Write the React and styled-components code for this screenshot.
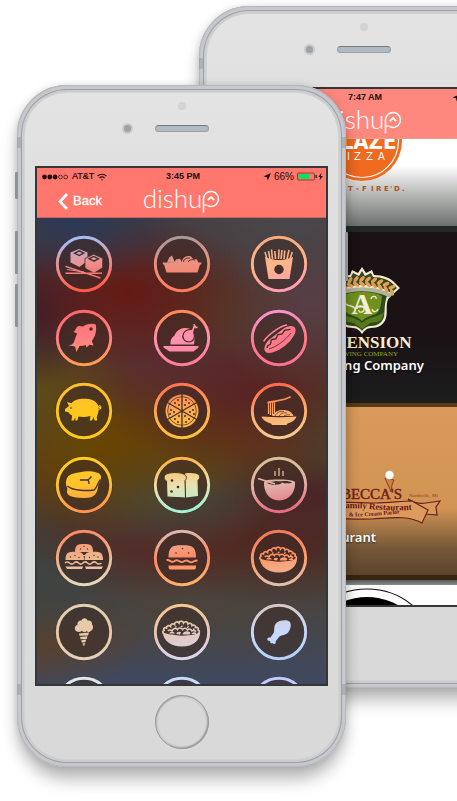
import React from "react";
import styled, { createGlobalStyle } from "styled-components";

const sans = '"Liberation Sans", Arial, sans-serif';
const serif = '"Liberation Serif", "Times New Roman", serif';

const GlobalStyle = createGlobalStyle`
  *, *::before, *::after { box-sizing: border-box; }
  body { margin: 0; background: #fff; font-family: ${sans}; }
  button { padding: 0; border: 0; background: none; font: inherit; color: inherit; cursor: pointer; }
`;

/* ---------- Stage and device ---------- */

const Stage = styled.main`
  display: grid;
  justify-content: start;
  align-items: start;
  min-height: 100vh;
  padding: 6px 0 34px 17px;
  overflow: hidden;
`;

const Phone = styled.section`
  grid-area: 1 / 1;
  position: relative;
  display: flex;
  flex-direction: column;
  width: 329px;
  margin-left: ${(p) => (p.$back ? 182 : 0)}px;
  margin-top: ${(p) => (p.$back ? 0 : 79)}px;
  padding: 0 18px;
  border-radius: 50px;
  background: linear-gradient(#e4e4e4, #dedede 18%, #d9d9d9);
  box-shadow:
    inset 0 0 0 1px #b6b8bc,
    inset 0 0 0 4px #c6c8cd,
    inset 0 0 0 5px #9fa1a5,
    inset 0 0 0 7px #cbcccd,
    inset 0 0 0 8px #d2d3d4,
    0 0 7px rgba(0, 0, 0, 0.1),
    0 8px 16px rgba(0, 0, 0, 0.18),
    0 18px 18px -4px rgba(0, 0, 0, 0.16);
`;

const SideKey = styled.span`
  position: absolute;
  top: ${(p) => p.$top}px;
  ${(p) => p.$side}: -2px;
  width: 3px;
  height: ${(p) => p.$length}px;
  border-radius: 1px;
  background: #8f9297;
`;

const AntennaBand = styled.span`
  position: absolute;
  top: ${(p) => p.$top}px;
  ${(p) => p.$side}: 0;
  width: 4px;
  height: 11px;
  background: rgba(130, 132, 136, 0.35);
`;

const TopBezel = styled.div`
  display: grid;
  grid-template-columns: 1fr 54px 1fr;
  grid-template-rows: 8px 7px;
  row-gap: 15px;
  align-items: center;
  align-content: start;
  justify-items: center;
  height: 81px;
  padding-top: 17px;
`;

const Sensor = styled.span`
  grid-column: 2;
  width: 8px;
  height: 8px;
  border-radius: 50%;
  background: #d3d3d3;
`;

const Camera = styled.span`
  grid-column: 1;
  justify-self: end;
  margin-right: 22px;
  width: 11px;
  height: 11px;
  border: 2px solid #c9cacb;
  border-radius: 50%;
  background: #9ba3a9;
`;

const Speaker = styled.span`
  grid-column: 2;
  width: 54px;
  height: 7px;
  border: 1px solid #9da0a3;
  border-top-color: #777a7d;
  border-radius: 4px;
  background: #b0bac3;
`;

const BottomBezel = styled.div`
  display: flex;
  justify-content: center;
  height: 81px;
  padding-top: 9px;
`;

const HomeButton = styled.button`
  width: 54px;
  height: 54px;
  border-radius: 50%;
  background: linear-gradient(135deg, #a2a2a2, #d4d4d4 45%, #c0c0c0 60%, #8f8f8f);
  box-shadow: inset 0 0 0 1px #9b9b9b;
  display: grid;
  place-items: center;

  &::before {
    content: "";
    width: 48px;
    height: 48px;
    border-radius: 50%;
    background: #d8d8d8;
    box-shadow: 0 0 0 1px #d0d0d0;
  }
`;

const Screen = styled.div`
  display: flex;
  flex-direction: column;
  height: 520px;
  border: 2px solid #343638;
  overflow: hidden;
`;

/* ---------- App header ---------- */

const Header = styled.header`
  flex: none;
  background: ${(p) => (p.$faded ? "#ff887e" : "#ff776d")};
  border-bottom: 1px solid ${(p) => (p.$faded ? "#f09a92" : "#c9655f")};
`;

const StatusBar = styled.div`
  display: grid;
  grid-template-columns: 1fr auto 1fr;
  align-items: center;
  height: 17px;
  padding: 0 2px 0 5px;
  font-size: 9px;
  line-height: 11px;
  color: #1c0f0e;
`;

const StatusGroup = styled.div`
  display: flex;
  align-items: center;
  gap: 3px;
  justify-content: ${(p) => (p.$end ? "flex-end" : "flex-start")};
`;

const Carrier = styled.span`
  -webkit-text-stroke: 0.2px #1c0f0e;
`;

const Clock = styled.time`
  font-weight: 700;
`;

const Percent = styled.span`
  font-size: 10px;
`;

const NavBar = styled.nav`
  display: grid;
  grid-template-columns: 1fr auto 1fr;
  align-items: start;
  height: 32px;
  color: #fff;
`;

const BackButton = styled.button`
  align-self: center;
  justify-self: start;
  display: flex;
  align-items: center;
  gap: 5px;
  padding-left: 21px;
  font-size: 13px;
  line-height: 16px;
  -webkit-text-stroke: 0.3px #fff;
`;

const Brand = styled.h1`
  grid-column: 2;
  display: flex;
  align-items: flex-start;
  margin: 0;
  font: 300 26px/26px Lato, "Open Sans", sans-serif;
`;

const BrandMark = styled.svg`
  width: 18px;
  height: 23px;
  margin-top: 5px;
  overflow: visible;
`;

function BrandName() {
  return (
    <Brand aria-label="dishup">
      dishu
      <BrandMark viewBox="0 0 18 23" fill="none" stroke="#fff" strokeWidth="1.500" aria-hidden="true">
        <path d="M1.500 22.500V9a7.500 7.500 0 1 1 4 6.600" />
        <path d="M1.500 15h4" strokeWidth="1.200" />
        <path d="M5.800 10.200 9 7l3.200 3.200" strokeWidth="1.800" />
      </BrandMark>
    </Brand>
  );
}

const LocationArrow = () => (
  <svg width="8" height="8" viewBox="0 0 8 8" aria-hidden="true">
    <path d="M8 0 4.800 7.500 4 4.200.500 3.500z" fill="#1c0f0e" />
  </svg>
);

const SignalDots = () => (
  <svg width="27" height="6" viewBox="0 0 27 6" aria-hidden="true">
    {[0, 1, 2, 3, 4].map((i) => (
      <circle
        key={i}
        cx={2.5 + i * 5.3}
        cy="3"
        r={i < 3 ? 2.4 : 1.9}
        fill={i < 3 ? "#1c0f0e" : "none"}
        stroke="#1c0f0e"
        strokeWidth={i < 3 ? 0 : 0.7}
      />
    ))}
  </svg>
);

const Wifi = () => (
  <svg width="10" height="8" viewBox="0 0 10 8" fill="none" stroke="#1c0f0e" strokeWidth="1.200" aria-hidden="true">
    <path d="M.700 3a6.200 6.200 0 0 1 8.600 0M2.500 5a3.600 3.600 0 0 1 5 0" />
    <circle cx="5" cy="6.700" r=".7" fill="#1c0f0e" stroke="none" />
  </svg>
);

const Battery = ({ charging }) => (
  <svg width={charging ? 27 : 20} height="9" viewBox={charging ? "0 0 27 9" : "0 0 20 9"} aria-hidden="true">
    <rect x=".5" y="1" width="17" height="7" rx="1" fill="none" stroke="#6c2f2c" strokeWidth=".8" />
    <rect x="1.500" y="2" width="10.500" height="5" fill="#12dd5c" />
    <path d="M18.500 3v3h1.200V3z" fill="#1c0f0e" />
    {charging && <path d="M24.600.800 21.300 5h2l-.8 3.300L26 3.900h-2.200z" fill="#1c0f0e" />}
  </svg>
);

function AppHeader({ time, charging, faded, children }) {
  return (
    <Header $faded={faded}>
      <StatusBar>
        <StatusGroup>
          <SignalDots />
          <Carrier>AT&amp;T</Carrier>
          <Wifi />
        </StatusGroup>
        <Clock>{time}</Clock>
        <StatusGroup $end>
          <LocationArrow />
          <Percent>66%</Percent>
          <Battery charging={charging} />
        </StatusGroup>
      </StatusBar>
      <NavBar>
        {children}
        <BrandName />
      </NavBar>
    </Header>
  );
}

/* ---------- Cuisine grid ---------- */

const CuisineArea = styled.div`
  flex: 1;
  min-height: 0;
  overflow: hidden;
  background:
    radial-gradient(ellipse 110px 65px at 13% 0%, #2a3957, transparent),
    radial-gradient(ellipse 130px 75px at 32% 16%, #681710e0, transparent),
    radial-gradient(ellipse 70px 75px at 0% 20%, #3a2030, transparent),
    radial-gradient(ellipse 80px 60px at 62% 19%, #55402890, transparent),
    radial-gradient(ellipse 150px 80px at 88% 0%, #4a484b, transparent),
    radial-gradient(ellipse 110px 90px at 95% 18%, #573f46, transparent),
    radial-gradient(ellipse 90px 80px at 0% 38%, #5c4a1a, transparent),
    radial-gradient(ellipse 120px 60px at 42% 31%, #5a2c36b0, transparent),
    radial-gradient(ellipse 150px 80px at 72% 37%, #5a1f22d0, transparent),
    radial-gradient(ellipse 160px 95px at 20% 48%, #694500, transparent),
    radial-gradient(ellipse 110px 60px at 66% 47%, #653912b0, transparent),
    radial-gradient(ellipse 80px 60px at 100% 46%, #4c432c, transparent),
    radial-gradient(ellipse 110px 60px at 45% 60%, #3f4e47d0, transparent),
    radial-gradient(ellipse 110px 75px at 98% 59%, #4a2429, transparent),
    radial-gradient(ellipse 120px 60px at 38% 69%, #5c2220c0, transparent),
    radial-gradient(ellipse 140px 65px at 80% 69%, #55221ac0, transparent),
    radial-gradient(ellipse 110px 75px at 3% 77%, #3e4442, transparent),
    radial-gradient(ellipse 110px 50px at 0% 91%, #5a3f2a, transparent),
    radial-gradient(ellipse 190px 70px at 50% 83%, #4e4337c0, transparent),
    linear-gradient(#433b40, #522f2c 20%, #573a22 50%, #45382f 72%, #45464a 86%, #404960);
`;

const CuisineGrid = styled.ul`
  display: grid;
  grid-template-columns: repeat(3, 58px);
  justify-content: space-between;
  align-content: space-between;
  height: 499px;
  margin: 17px 18px 0;
  padding: 0;
  list-style: none;
`;

const CuisineButton = styled.button`
  display: block;
  width: 58px;
  height: 58px;
  border-radius: 50%;
`;

const Badge = styled.svg`
  display: block;
  width: 58px;
  height: 58px;
`;

const dark = "#43302b";

function Tiny({ points, r = 0.7 }) {
  return points.map(([x, y]) => <circle key={`${x}-${y}`} cx={x} cy={y} r={r} fill={dark} />);
}

const saladArt = (p) => (
  <>
    <path
      d="M11.500 31c-2-1-2.500-3-.5-3.500-1-2 .5-3.500 2.500-2.500 0-2.500 2.500-3 4-1.500 0-2.500 2.500-3.500 4-2 0-2.500 3-3.500 4.500-1.500.5-2.500 4-2.500 4.500 0 1.500-2 4.500-1.500 4.500 1 2-1.500 4-.5 4 1.500 2-1 4 0 3.500 2 2-.5 3.500.8 2.500 2.500 2 .5 2 3-.5 4"
      stroke={p}
      strokeWidth="1.700"
    />
    <path d="M15 28c1-1.500 3-1.500 4 0 1-2.500 4-3.500 5.500-1.500 1-2 4-2 5 0 1.500-2 4-1.500 5 .5 1.500-1.500 4-1 4.500 1 1.500-1 3-.5 4 1" stroke={p} strokeWidth="1.500" />
    <path fill={p} d="M16 30.500c1-2.500 5-2.500 6 0zM23.500 31c0-2 3-3 4.500-1.500L27 31.500zM29.500 31.500c.5-3.500 6-4.500 8-1.500l-1 1.500zM38.500 31c1-2.500 4.500-2.500 5 0z" />
    <path d="M22 24.500l1.500-1M28 24l1.500-1.200M34 24.500l1.800-1M40 26.500l1.500-.5" stroke={p} strokeWidth="1.400" />
    <path fill={p} d="M10 29.500c4 2 8 1.500 12 2.500 4 .8 9 1 13 .3 4-.6 8-.8 12-2.800 0 8-7 14-18 14s-19-6-19-14z" />
  </>
);

const burgerTop = (x, y, w, p) => (
  <path fill={p} d={`M${x} ${y}c0-${w * 0.45} ${w * 0.2}-${w * 0.45} ${w / 2}-${w * 0.45}s${w / 2} 0 ${w / 2} ${w * 0.45}z`} />
);

const art = {
  sushi: (p) => (
    <>
      <path fill={p} d="M15.500 17.500 24 14l8.500 3.500v8.300L24.500 32l-9-4.500z" />
      <path fill={dark} d="M18 18.200 24.200 15l6 2.900-5.800 3.400z" />
      <path fill={p} d="M21 18.200l3.200-1.500 3 1.400-2.900 1.600z" />
      <path fill={p} stroke={dark} strokeWidth=".8" d="M30 23.500 38.700 19.200l9 4v9.500L39 38.200l-9-5z" />
      <path fill={dark} d="M32.500 23.800l6.200-3 6.300 3-6 3.300z" />
      <path fill={p} d="M35.600 23.700l3.200-1.400 3.100 1.400-3 1.600z" />
      <path stroke={p} strokeWidth="1.400" d="M10.500 38.300H47M10.500 31.300 45.500 43" />
      <path stroke={p} strokeWidth="1" d="M12 34.500 29 37" />
    </>
  ),
  tacos: (p) => (
    <>
      <path fill={p} d="M14 27.500l2.200-5 2.800-2 1.500 3.500 1.500 4zM21 28l2-3.500 4-.8 2.500 4.300zM29 26c1-4 6-6 9-4.500l2 2.500 4 .5 1.500 3.500H29z" />
      <path d="M30 27c1-3 4-4.500 7-4M35 27c1-2 4-3 7-2" stroke={dark} strokeWidth=".9" fill="none" />
      <path fill={p} d="M9.500 27.500h39l-.5 2h-1L44.500 37.500h-31L11 29.500h-1z" />
    </>
  ),
  fries: (p) => (
    <>
      <path
        stroke={p}
        strokeWidth="1.600"
        fill="none"
        d="M17 24l-2-7M20 24l-1.500-8M22.500 24l-1-9.500M25.500 24l-.7-8M28.500 24l.5-9.500M31 24l1-9M34 24l.8-8.500M37 24l2-9M40 24l2.300-7"
      />
      <path fill={p} d="M15 22c4 1 7 3 14 3s10-2 14-3l-3.500 22H18.500z" />
      <circle cx="29" cy="34.500" r="4.700" fill={dark} />
    </>
  ),
  fish: (p) => (
    <>
      <path
        fill={p}
        d="M40.800 15.500c1 6-.3 12-4 16.500l1.700 4.500-4-.8-3 2.800-.8-2.500c-2 .8-4.200 1-6.200 1l-3 6-1.500-5.500-6.500-1.300c4.500-.5 5.200-2 6.200-5.200.8-2.300 1.300-4.500 2.600-6.500l-4-1.500c2.500-1 2.500-5.500 5.800-6l4 .6c3.200-2.400 8-3.600 12.700-2.100z"
      />
      <circle cx="36" cy="20" r="1.700" fill={dark} />
    </>
  ),
  turkey: (p) => (
    <>
      <path fill={p} d="M10.500 37h35v1.500L40.500 42.500h-24l-6-4z" />
      <path fill={p} d="M17.500 35.500c-.5-4 1-7 4-9 2-5 6-7.500 11-7.500 7 0 10.500 6 8.500 16.500z" />
      <path fill={p} stroke={dark} strokeWidth="1.200" d="M38.500 20.500l1.500-4-.6-2.400 2.700.4 1.400 2.500 2 .2-.6 2.500-3.200.2-1 3.500c2 5-.5 9.600-4.700 9.600-4.800 0-7.500-4.500-5.500-8.500 1.500-3 4.500-4.200 8-4z" />
    </>
  ),
  hotdog: (p) => (
    <>
      <ellipse cx="30" cy="30.500" rx="19" ry="8" transform="rotate(-39 30 30.500)" fill={p} />
      <path d="M13.500 33 38 14" stroke={dark} strokeWidth="3.400" />
      <path d="M14 32C17 26.500 30 17 36.500 16" stroke={p} strokeWidth="1.600" strokeLinecap="round" />
      <path d="M17 39c0-3 1.500-2.500 3-3.500s0-4 2-5 2.500.5 4-1 .5-3.500 2.500-4 2.500.5 4-1 1-3 3-3.500 3 .5 5-1" stroke={dark} strokeWidth="1.400" />
      <path d="M19 40c8-2.500 16-8.500 22-16" stroke={dark} strokeWidth=".8" />
    </>
  ),
  pig: (p) => (
    <>
      <path
        fill={p}
        d="M10 27l4-3-2-4 4.500 1.200C20 17 25 16.500 31 16.800c7 .4 12 3.200 12.700 9.200 0 4-1 7-2 9l.5 3.500h-2.500L38.500 35 37 38.500h-2.200l.7-4.500c-4 1-8 1.200-12 .5l-1.200 4h-2l.2-3-2 3h-2l.7-5c-2-1-3-2-4-3.500l-3.200-.6z"
      />
      <path d="M43.500 27c3 1 3-3.500 1-3.200-1.800.4-.4 2.700 1.800 1.500" stroke={p} strokeWidth="1.100" fill="none" />
      <circle cx="16" cy="26" r=".8" fill={dark} />
    </>
  ),
  pizza: (p) => (
    <>
      <circle cx="29" cy="29" r="16.500" fill={p} />
      <circle cx="29" cy="29" r="14.300" fill="none" stroke={dark} strokeWidth=".7" />
      <path d="M29 11v36M13.500 20 44.500 38M44.500 20l-31 18" stroke={dark} strokeWidth="1.300" />
      <Tiny
        r={1}
        points={[[25, 18], [22, 21], [26, 23], [33, 18], [36, 21], [32, 23], [18, 28], [21, 30], [17, 32], [40, 28], [37, 30], [41, 32], [25, 40], [22, 37], [26, 34], [33, 40], [36, 37], [32, 34]]}
      />
    </>
  ),
  pasta: (p) => (
    <>
      <path d="M18.500 20v12M20.500 20v13M22.500 20v13M24.500 20v11" stroke={p} strokeWidth="1.200" />
      <path fill={p} d="M17.500 19.500l8-1.200 9-1.800 6-2.500.5 1.500-6 2.500-9.500 2-8 1.500z" />
      <path fill={p} d="M22 34c3-5 7-6 11-6 5 0 9 2 10.500 6z" />
      <path d="M25 34c2-4 5-5 9-4.500M29 34c2-3 5-3.500 8-3M34 34c1-1 4-1.500 6-1" stroke={dark} strokeWidth=".7" fill="none" />
      <path fill={p} d="M11.500 34.500c12 1 23 1 35 0-1 3.500-4 5.500-9 7l-1 1.500H22l-1-1.500c-5-1.500-8.500-3.500-9.500-7z" />
    </>
  ),
  steak: (p) => (
    <>
      <path fill={p} d="M12 22c3-5 8-4.500 14-6 6-1.500 17-1 19.500 3 1 2 .5 6-2 9.500l-1 5c-1 5-5 8.500-12 8.500-8 0-18-1-18.500-5.500l.3-4.500c-1.800-2.500-1.800-7-.3-10z" />
      <path d="M12.500 30c5 5 20 5 26.500 4 3-2 3.500-7 6.500-10.500" stroke={dark} strokeWidth="1.400" fill="none" />
      <path d="M25 24h7c2 0 2-1 4.500-3.500M33 24c1 1 1 2 1 4" stroke={dark} strokeWidth="1.400" fill="none" />
    </>
  ),
  bread: (p) => (
    <>
      <path fill={p} d="M32 17.500c5-1 12-.5 14 2 1 3-1 4-1.500 5l.5 15.500-12 1.500z" />
      <path fill={p} stroke={dark} strokeWidth="1" d="M12.500 18.500c4-2.500 14-2.500 18-.5 3 1.500 4 4 1.500 6.500l.5 17.500-18.500-1-.5-16c-2-1-3.500-4-1-6.500z" />
      <Tiny r={1.3} points={[[19, 24.500], [25, 31], [18.500, 35.500]]} />
    </>
  ),
  soup: (p) => (
    <>
      <path stroke={p} strokeWidth="1.300" d="M25 20v-5M29 20v-8M33 20v-5" />
      <path fill={p} d="M14 26c2-2.500 9-2.500 15-2.500S43 24 45 26c1 10-6 18.500-16 18.500S13.500 36 14 26z" />
      <path fill={dark} d="M17 27c3-2 6-1 9-2 3 1 6-.5 9 0 3 0 5 .5 7 1.500-2 1.500-5 .5-7 1l-3-1c-2 2-3 2-5 2-3 1-7 0-10-1.500z" />
      <path stroke={p} strokeWidth="1.800" fill="none" d="M8 22.500 19 26l6 2" />
    </>
  ),
  sliders: (p) => (
    <>
      {burgerTop(20, 23, 18, p)}
      {burgerTop(10.500, 31, 18.500, p)}
      {burgerTop(29.500, 31, 18.500, p)}
      <path d="M23 25h3l2 1.500h2l2-1.500h3" stroke={p} strokeWidth="1.200" fill="none" />
      <path d="M10 34c1.500-1.500 3-1.500 4.500 0s3 1.500 4.500 0 3-1.500 4.500 0 3 1.500 4.500 0 3-1.500 4.500 0 3 1.500 4.500 0 3-1.500 4.500 0 3 1.500 5 0" stroke={p} strokeWidth="1.500" fill="none" />
      <path fill={p} d="M10.500 37.500h17.500V38l-1 2H12zM30 37.500h18L46.500 40H31z" />
      <Tiny points={[[29, 17.500], [25.500, 20], [32.500, 20], [15.500, 28], [20, 26.500], [24, 28.500], [34.500, 28.500], [39, 26.500], [43, 28]]} />
    </>
  ),
  burger: (p) => (
    <>
      {burgerTop(15.500, 28.500, 27.500, p)}
      <path d="M13.500 31c2-.5 3 .5 4.500 1.500s3 0 4.500-1 3 0 4.500 1 3 .5 4.500-.5 3-.5 4.500.5 3 1 4.500 0 2-1 4-1" stroke={p} strokeWidth="2" fill="none" />
      <path fill={p} d="M15.500 36.500h27.500c0 3-.5 4-2 4H17.500c-1.500 0-2-1-2-4z" />
      <Tiny r={0.8} points={[[29.500, 19.500], [23, 24], [35.500, 24]]} />
    </>
  ),
  salad: saladArt,
  iceCream: (p) => (
    <>
      <path fill={p} d="M21 28c-2-2-1-6 1.500-6-.5-3 2-5 4-4.500 1-3 5-3 6 0 3-.5 5 1.500 4.500 4 2 1.500 1 6-1.500 6.500-1.500 2-3 1-4 0-2 2-3.500 1-4.500-.2-2 1.700-4 1.700-6 .2z" />
      <path fill={p} d="M24 30.500l10-1-1 3-8.500.3zM25 34l7.500-.7-.8 2.700-6 .3zM26.200 37.300l5-.8-.8 2.700-3.500.4zM27.500 40.500l2.500-.5-1 3.500z" />
    </>
  ),
  drumstick: (p) => (
    <path
      fill={p}
      d="M27 19.500c3-2.500 10-3 12.500-1 2.500 3 1 8.500-1.800 11.500-2.700 2-5.500 2-8 3.200l-4 5c.8 2.500-1.700 3.500-3.200 2-1 .2-1.800 0-2.300-.8.5-1.800-1-1.600-2.500-2-1.300-1.700.5-3.500 2.500-2.600l3.600-5c1-3.500-.5-7.500 3.200-10.300z"
    />
  ),
  none: () => null,
};

const cuisines = [
  ["Sushi", "sushi", "#a6bcf6", "#ee8f90", "#ff5a48"],
  ["Mexican", "tacos", "#a89a9c", "#ee9080", "#ff7a5c"],
  ["Fries", "fries", "#f6ab7e", "#ffb587", "#ff9cb2"],
  ["Seafood", "fish", "#ff6868", "#ff8086", "#ff9c52"],
  ["Poultry", "turkey", "#ff8a5a", "#ff92b4", "#ff7d98"],
  ["Hot dogs", "hotdog", "#f794cc", "#ff7a88", "#ff7090"],
  ["Pork", "pig", "#ffbe30", "#ffc61e", "#ffca14"],
  ["Pizza", "pizza", "#ff7650", "#ffab52", "#ffc038"],
  ["Pasta", "pasta", "#ff6a4e", "#ffab6c", "#f5cb90"],
  ["Steak", "steak", "#ffcc1e", "#ffc22e", "#ff9450"],
  ["Bakery", "bread", "#ffb348", "#ece0ae", "#a4f2d8"],
  ["Soup", "soup", "#d6c094", "#e2b0a8", "#e66e80"],
  ["Sliders", "sliders", "#ff8a66", "#edb48e", "#e3d8bc"],
  ["Burgers", "burger", "#dcb8a8", "#ff8a64", "#ffb06c"],
  ["Salads", "salad", "#f07c60", "#ff9a68", "#e6bca8"],
  ["Ice cream", "iceCream", "#e0d2b4", "#e8c8a4", "#e4d0bc"],
  ["Healthy", "salad", "#f4c692", "#e2c8ba", "#dcd4ee"],
  ["Wings", "drumstick", "#d8c6c6", "#c8daff", "#b4d0ff"],
  ["Coffee", "none", "#dde8ea", "#d8e4f0", "#c8d8f0"],
  ["Drinks", "none", "#c4defa", "#c0d4ff", "#b8d0ff"],
  ["Desserts", "none", "#bccdff", "#b8c8ff", "#b4c4ff"],
];

function CuisineBadge({ id, drawing, colors }) {
  const paint = `url(#${id})`;
  return (
    <Badge viewBox="0 0 58 58" fill="none" aria-hidden="true">
      <defs>
        <linearGradient id={id} gradientUnits="userSpaceOnUse" x1="25" y1="1" x2="33" y2="57">
          <stop offset="0.050" stopColor={colors[0]} />
          <stop offset="0.500" stopColor={colors[1]} />
          <stop offset="0.950" stopColor={colors[2]} />
        </linearGradient>
      </defs>
      <circle cx="29" cy="29" r="28.800" fill="#3c2a26" fillOpacity="0.500" />
      <circle cx="29" cy="29" r="26.700" stroke={paint} strokeWidth="2.900" />
      {art[drawing](paint)}
    </Badge>
  );
}

/* ---------- Restaurant list ---------- */

const RestaurantList = styled.ul`
  flex: 1;
  display: grid;
  grid-template-rows: 93px 175px 173px 1fr;
  min-height: 0;
  margin: 0;
  padding: 0;
  list-style: none;
`;

const cardSkins = {
  blaze: { fill: "linear-gradient(#fff 30%, #b4b6b4 65%, #6c706e)", edge: "6px solid #242928" },
  ascension: { fill: "linear-gradient(#1a1214 60%, #1b1d1e)", edge: "4px solid #5c3a16" },
  rebecca: { fill: "linear-gradient(#d99a5c, #d29453 60%, #735638 85%, #5c452c)", edge: "5px solid #38260f" },
  last: { fill: "linear-gradient(#5a5a5a, #8c8c8c 5px, #fff 5px)", edge: "0" },
};

const Card = styled.li`
  display: grid;
  align-items: end;
  min-height: 0;
  overflow: hidden;
  background: ${(p) => cardSkins[p.$skin].fill};
  border-bottom: ${(p) => cardSkins[p.$skin].edge};
`;

const CardArt = styled.svg`
  grid-area: 1 / 1;
  align-self: ${(p) => (p.$top ? "start" : "end")};
  display: block;
  width: 289px;
  height: ${(p) => p.$height}px;
`;

const CardTitle = styled.h2`
  grid-area: 1 / 1;
  margin: 0;
  padding: 0 0 29px 22px;
  font: 600 13px/18px "Noto Sans", "Open Sans", sans-serif;
  color: #fff;
  text-shadow: 0 1px 2px rgba(0, 0, 0, 0.6);
`;

const BlazeLogo = () => (
  <CardArt $height={87} viewBox="219 139 289 87" aria-label="Blaze Pizza, fast-fire'd">
    <circle cx="362" cy="141" r="40" fill="#f06a1f" />
    <circle cx="362" cy="141" r="36.500" fill="none" stroke="#fff" strokeWidth="1.200" />
    <text x="361" y="149" textAnchor="middle" fontFamily='"DejaVu Sans Condensed", "DejaVu Sans", sans-serif' fontWeight="700" fontSize="22" fill="#fff">
      BLAZE
    </text>
    <text x="337 347 354 366 378" y="160" fontFamily='"DejaVu Sans", sans-serif' fontSize="10" fill="#fff">
      PIZZA
    </text>
    <text x="312 321 331 348 356 362 371 376 384 390 394 402" y="191" fontFamily='"DejaVu Sans", sans-serif' fontWeight="700" fontSize="7" fill="#b0501f">
      FAST-FIRE'D.
    </text>
  </CardArt>
);

const AscensionLogo = () => (
  <CardArt $height={171} viewBox="219 232 289 171" aria-label="Ascension Brewing Company">
    <path
      fill="#f2ecd2"
      d="M362 267L366 273L372 270L374 275C383 275 391 278 395 283L400 288L392 295L389 298C385 303 388 312 386 318C384 325 378 328 371 328C367 328 364 331 362 334C360 331 357 328 353 328C346 328 340 325 338 318C336 312 339 303 335 298L332 295L324 288L329 283C333 278 341 275 350 275L352 270L358 273Z"
    />
    <path fill="#3a4320" d="M362 271l3 5 6-3 2 4c9 0 16 3 20 7l4 4-6 5c-9-6-18-8-29-8s-20 2-29 8l-6-5 4-4c4-4 11-7 20-7l2-4 6 3z" />
    <path fill="#2e4a1c" d="M362 290c10 0 18 2 25 6-3 8-2 15-3 21-2 6-7 9-13 9-4 0-7 2-9 5-2-3-5-5-9-5-6 0-11-3-13-9-1-6 0-13-3-21 7-4 15-6 25-6z" />
    <path fill="#71901f" d="M362 292c8 0 15 1 20 4-1 8-1 13-5 17-4 3-10 3-15 8-5-5-11-5-15-8-4-4-4-9-5-17 5-3 12-4 20-4z" />
    <path fill="#577a1c" d="M340 312c7 6 14 4 22 11 8-7 15-5 22-11l-2 7c-4 4-8 3-12 4l-8 6-8-6c-4-1-8 0-12-4z" />
    <g fill="#dfa255">
      {[-30, -24, -18, -12, -6, 0, 6, 12, 18, 24, 30].map((dx) => (
        <g key={dx}>
          <ellipse cx={362 + dx} cy={279 + (dx * dx) / 110} rx="1.800" ry="3.600" transform={`rotate(${40 + dx} ${362 + dx} ${279 + (dx * dx) / 110})`} />
          <ellipse cx={362 + dx} cy={284 + (dx * dx) / 110} rx="1.800" ry="3.600" transform={`rotate(${dx - 50} ${362 + dx} ${284 + (dx * dx) / 110})`} />
        </g>
      ))}
    </g>
    <path d="M333 296c17-9 41-9 58 0" fill="none" stroke="#aeb39a" strokeWidth="4" />
    <text x="362" y="314" textAnchor="middle" fontFamily={serif} fontWeight="700" fontSize="29" fill="#f4efd8">
      A
    </text>
    <path d="M346 304c3 3 8 1 9 5M357 309c0-4 7-4 7 0s-6 4-5 1M371 299c1-4 6-3 5 0M372 309c1 4 5 3 6 0" fill="none" stroke="#ebe7cc" strokeWidth="1.400" />
    <text x="362" y="348" textAnchor="middle" fontFamily={serif} fontWeight="700" fontSize="17" fill="#f6eed0">
      ASCENSION
    </text>
    <text x="398" y="356" textAnchor="end" fontFamily={serif} fontSize="7" fill="#93a526">
      BREWING COMPANY
    </text>
  </CardArt>
);

const RebeccaLogo = () => (
  <CardArt $height={168} viewBox="219 407 289 168" aria-label="Rebecca's Family Restaurant and Ice Cream Parlor">
    <defs>
      <path id="ribbonLine" d="M300 514q42-8 70-5t60-1" />
      <path id="parlorLine" d="M330 515q30 4 80-3" />
    </defs>
    <text x="402" y="499" textAnchor="end" fontFamily={serif} fontSize="15" fill="#711a1b" stroke="#711a1b" strokeWidth=".4">
      REBECCA'S
    </text>
    <path d="M385 478l9 2-2 5-1 7c-1-4-4-8-6-14z" fill="#c98245" stroke="#7b2a1c" strokeWidth=".8" />
    <circle cx="389.500" cy="475" r="4.500" fill="#fff" stroke="#b78b62" strokeWidth=".6" />
    <path d="M408 499c6 4 12 5 18 4l14-2-4 6 1 8-11-1-12-8z" fill="#d9995b" stroke="#6d1e1b" strokeWidth="1.200" />
    <path d="M296 507c30-8 60-4 80-4 12 0 26-2 36-2l16 9-6 13c-14-8-32-5-50-4-26 1-50-3-76 4z" fill="#dc9c5e" stroke="#6d1e1b" strokeWidth="1.200" />
    <text fontFamily={serif} fontWeight="700" fontSize="9" fill="#6b1417">
      <textPath href="#ribbonLine" startOffset="40">Family Restaurant</textPath>
    </text>
    <text fontFamily={serif} fontWeight="700" fontSize="6" fill="#6b1417">
      <textPath href="#parlorLine" startOffset="19">&amp; Ice Cream Parlor</textPath>
    </text>
    <text x="409" y="497" fontFamily={serif} fontSize="5" fill="#8b3a24">
      Northville, Mi
    </text>
  </CardArt>
);

const RoundLogo = () => (
  <CardArt $top $height={25} viewBox="219 580 289 25" aria-hidden="true">
    <circle cx="367" cy="660" r="71" fill="#fff" stroke="#111" strokeWidth="1.200" />
    <circle cx="367" cy="660" r="63" fill="#000" />
  </CardArt>
);

/* ---------- Devices ---------- */

function Device({ back, label, children }) {
  return (
    <Phone $back={back} aria-label={label}>
      <SideKey $side="left" $top={87} $length={27} />
      <SideKey $side="left" $top={146} $length={43} />
      <SideKey $side="left" $top={199} $length={43} />
      <SideKey $side="right" $top={147} $length={49} />
      <AntennaBand $side="left" $top={52} />
      <AntennaBand $side="right" $top={52} />
      <AntennaBand $side="left" $top={599} />
      <AntennaBand $side="right" $top={599} />
      <TopBezel>
        <Sensor />
        <Camera />
        <Speaker />
      </TopBezel>
      <Screen>{children}</Screen>
      <BottomBezel>{!back && <HomeButton type="button" aria-label="Home" />}</BottomBezel>
    </Phone>
  );
}

export default function App() {
  return (
    <>
      <GlobalStyle />
      <Stage>
        <Device back label="Restaurants">
          <AppHeader time="7:47 AM" faded />
          <RestaurantList>
            <Card $skin="blaze">
              <BlazeLogo />
            </Card>
            <Card $skin="ascension">
              <AscensionLogo />
              <CardTitle>Ascension Brewing Company</CardTitle>
            </Card>
            <Card $skin="rebecca">
              <RebeccaLogo />
              <CardTitle>Rebecca's Restaurant</CardTitle>
            </Card>
            <Card $skin="last">
              <RoundLogo />
            </Card>
          </RestaurantList>
        </Device>

        <Device label="Cuisines">
          <AppHeader time="3:45 PM" charging>
            <BackButton type="button">
              <svg width="10" height="17" viewBox="0 0 10 17" fill="none" stroke="#fff" strokeWidth="2.600" aria-hidden="true">
                <path d="M9 1 2 8.500 9 16" />
              </svg>
              Back
            </BackButton>
          </AppHeader>
          <CuisineArea>
            <CuisineGrid>
              {cuisines.map(([name, drawing, ...colors], i) => (
                <li key={name}>
                  <CuisineButton type="button" aria-label={name}>
                    <CuisineBadge id={`cuisine-${i}`} drawing={drawing} colors={colors} />
                  </CuisineButton>
                </li>
              ))}
            </CuisineGrid>
          </CuisineArea>
        </Device>
      </Stage>
    </>
  );
}
